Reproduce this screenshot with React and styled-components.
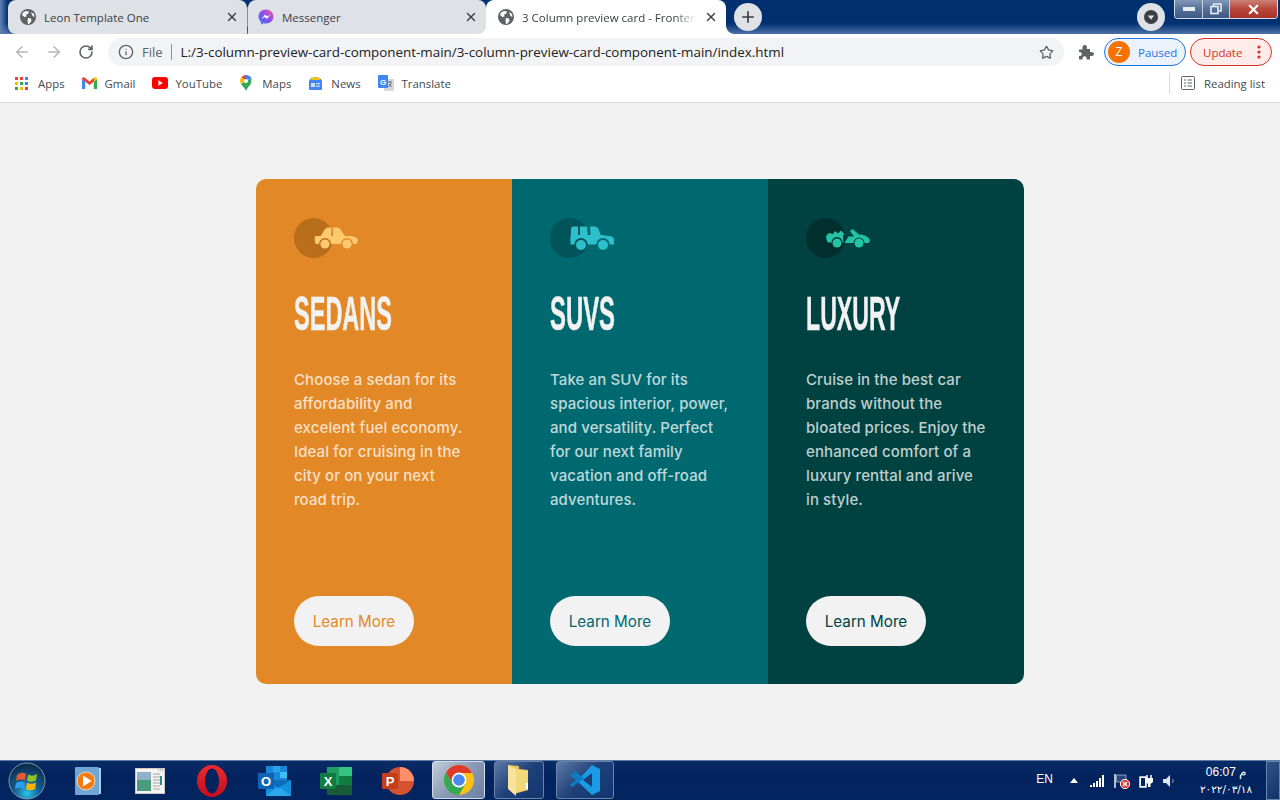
import React from 'react'
import styled, { createGlobalStyle } from 'styled-components'
import { ArrowLeft, ArrowRight, RotateCw, Info, Star, X, Plus } from 'lucide-react'

const GlobalStyle = createGlobalStyle`
  html, body { margin: 0; padding: 0; height: 100%; background: #f2f2f2; }
  #root { height: 100%; }
  * { box-sizing: border-box; }
`

const Screen = styled.div`
  height: 800px;
  display: flex;
  flex-direction: column;
  overflow: hidden;
  font-family: 'Open Sans', 'Liberation Sans', sans-serif;
`

/* browser chrome */
const TabStrip = styled.div`
  height: 34px;
  flex: none;
  display: flex;
  padding-left: 8px;
  background:
    linear-gradient(90deg, #5f82b4 0, rgba(95,130,180,0) 8px),
    linear-gradient(180deg, rgba(90,125,175,0) 68%, rgba(90,125,175,.85) 100%),
    #00306f;
`

const Tab = styled.div`
  position: relative;
  width: ${p => p.$width}px;
  display: flex;
  align-items: center;
  padding-left: ${p => p.$pad}px;
  padding-right: 8px;
  gap: 8px;
  font-size: 11.5px;
  color: #3c4043;
  white-space: nowrap;
  background: ${p => (p.$active ? '#fff' : '#dee1e6')};
  border-radius: ${p => p.$radius};
  z-index: ${p => (p.$active ? 0 : 1)};

  ${p => p.$active && `
    &::before, &::after {
      content: '';
      position: absolute;
      bottom: 0;
      width: 8px;
      height: 8px;
    }
    &::before { left: -8px; background: #fff; }
    &::after {
      right: -8px;
      background: radial-gradient(circle at 100% 0, transparent 7.5px, #fff 8px);
    }
  `}
`

const TabDivider = styled.div`
  width: 1px;
  height: 20px;
  align-self: center;
  background: #8a8d92;
  z-index: 2;
  flex: none;
`

const TabTitle = styled.span`
  flex: 1;
  overflow: hidden;
  mask-image: ${p => (p.$fade ? 'linear-gradient(90deg, #000 88%, transparent)' : 'none')};
`

const NewTab = styled.div`
  width: 28px;
  height: 28px;
  margin: 3px 0 0 8px;
  border-radius: 50%;
  background: #dee1e6;
  color: #3c4043;
  display: flex;
  align-items: center;
  justify-content: center;
`

const ProfileDot = styled.div`
  width: 28px;
  height: 28px;
  margin: 3px 9px 0 auto;
  border-radius: 50%;
  background: #dee1e6;
  display: flex;
  align-items: center;
  justify-content: center;
`

const WindowControls = styled.div`
  width: 104px;
  height: 19px;
  margin-right: 2px;
  display: flex;
  border: 1px solid #d6dde8;
  border-top: 0;
  border-radius: 0 0 4px 4px;
  overflow: hidden;
`

const WinButton = styled.div`
  width: ${p => p.$width}px;
  display: flex;
  align-items: center;
  justify-content: center;
  border-right: ${p => (p.$close ? '0' : '1px solid #c5cfdd')};
  background: ${p => (p.$close
    ? 'linear-gradient(180deg, #c98277 0, #b9473a 50%, #a8322a 100%)'
    : 'linear-gradient(180deg, #8298b8 0, #566f96 50%, #3c5a88 100%)')};
`

const Toolbar = styled.div`
  height: 38px;
  flex: none;
  background: #fff;
  display: flex;
  align-items: center;
  padding: 0 0 2px 6px;
`

const NavButton = styled.div`
  width: 32px;
  display: flex;
  justify-content: center;
  color: ${p => (p.$off ? '#b4b7bb' : '#5f6368')};
`

const AddressBar = styled.div`
  width: 956px;
  height: 28px;
  margin-left: 6px;
  border-radius: 14px;
  background: #f1f3f4;
  display: flex;
  align-items: center;
  padding: 0 10px;
  font-size: 13px;
  color: #202124;
`

const SiteLabel = styled.span`
  margin-left: 8px;
  padding-right: 8px;
  font-size: 13px;
  line-height: 16px;
  color: #5f6368;
  border-right: 1px solid #8f9296;
`

const Url = styled.span`
  margin-left: 9px;
  flex: 1;
  white-space: nowrap;
  font-size: 13.4px;
`

const ExtensionSlot = styled.div`
  width: 40px;
  padding-left: 4px;
  display: flex;
  justify-content: center;
`

const Pill = styled.div`
  width: 82px;
  height: 28px;
  margin-right: 4px;
  border-radius: 14px;
  border: 1px solid ${p => p.$line};
  background: ${p => p.$fill};
  color: ${p => p.$line};
  display: flex;
  align-items: center;
  font-size: 11.5px;
`

const Avatar = styled.span`
  width: 22px;
  height: 22px;
  margin: 0 8px 0 3px;
  border-radius: 50%;
  background: #f57200;
  color: #fff;
  font-size: 12px;
  text-align: center;
  line-height: 22px;
`

const UpdateLabel = styled.span`
  margin-left: 12px;
  flex: 1;
`

const Bookmarks = styled.div`
  height: 31px;
  flex: none;
  background: #fff;
  border-bottom: 1px solid #d8d8d8;
  display: flex;
  align-items: center;
  padding: 0 0 8px 15px;
  font-size: 11.4px;
  color: #444a50;
`

const Bookmark = styled.div`
  display: flex;
  align-items: center;
  gap: ${p => p.$gap}px;
  margin-right: ${p => p.$after}px;
`

const ReadingList = styled.div`
  margin-left: auto;
  width: 111px;
  height: 21px;
  border-left: 1px solid #d5d7da;
  display: flex;
  align-items: center;
  gap: 9px;
  padding-left: 11px;
`

/* the page itself */
const Main = styled.main`
  flex: 1;
  display: flex;
  align-items: center;
  justify-content: center;
  background: #f2f2f2;
`

const Card = styled.section`
  width: 768px;
  height: 505px;
  display: grid;
  grid-template-columns: repeat(3, minmax(0, 1fr));
  border-radius: 10px;
  overflow: hidden;
`

const Column = styled.article`
  background: ${p => p.$bg};
  padding: 39px 30px 38px 38px;
  display: flex;
  flex-direction: column;
  align-items: flex-start;
`

const IconBox = styled.div`
  position: relative;
  height: 40px;
  padding-left: 20px;
  display: flex;
  align-items: center;

  &::before {
    content: '';
    position: absolute;
    left: 0;
    top: 0;
    width: 39px;
    height: 40px;
    border-radius: 50%;
    background: ${p => p.$shade};
  }

  svg { position: relative; display: block; }
`

const Title = styled.h2`
  margin: 34px 0 0;
  height: 44px;
  font-family: 'Liberation Sans', sans-serif;
  font-size: 48px;
  line-height: 44px;
  font-weight: 700;
  color: #f2f2f2;
  white-space: nowrap;
  transform: scaleX(${p => p.$squeeze});
  transform-origin: left center;
  -webkit-text-stroke: .5px #f2f2f2;
`

const Copy = styled.p`
  margin: 32px 0 0;
  font-family: Inter, 'Open Sans', sans-serif;
  font-size: 15px;
  font-weight: 500;
  line-height: 24px;
  letter-spacing: .1px;
  color: rgba(255, 255, 255, .75);
  white-space: pre-line;
`

const LearnMore = styled.a`
  margin-top: auto;
  width: 120px;
  height: 50px;
  border-radius: 25px;
  background: #f2f2f2;
  color: ${p => p.$ink};
  font-family: Inter, 'Open Sans', sans-serif;
  font-size: 15.2px;
  display: flex;
  align-items: center;
  justify-content: center;
`

/* windows taskbar */
const Taskbar = styled.footer`
  height: 40px;
  flex: none;
  display: flex;
  background: linear-gradient(180deg, #0a2c66 0, #02235e 40%, #02245f 100%);
  border-top: 1px solid #5e7ba5;
  color: #fff;
  font-family: 'Liberation Sans', sans-serif;
`

const StartSlot = styled.div`
  width: 57px;
  padding-left: 8px;
  display: flex;
  align-items: center;
`

const AppSlot = styled.div`
  width: 62px;
  display: flex;
  align-items: center;
  justify-content: center;
`

const RunningApp = styled.div`
  width: ${p => p.$width}px;
  height: 38px;
  margin: 0 ${p => p.$after}px 0 ${p => p.$before}px;
  border-radius: 3px;
  border: 1px solid ${p => (p.$active ? '#d5dce8' : '#6b83a8')};
  background: ${p => (p.$active
    ? 'linear-gradient(135deg, #c3cddd 0, #8a9ab4 50%, #6c80a3 100%)'
    : 'linear-gradient(135deg, #5d7aa6 0, #1e4078 50%, #14366f 100%)')};
  display: flex;
  align-items: center;
  justify-content: center;
`

const Tray = styled.div`
  margin-left: auto;
  display: flex;
  align-items: center;
`

const TraySlot = styled.div`
  width: 24px;
  display: flex;
  justify-content: center;
  margin-left: ${p => p.$before || 0}px;
`

const Lang = styled.span`
  width: 29px;
  margin-top: -4px;
  text-align: center;
  font-size: 12px;
`

const Clock = styled.div`
  width: 72px;
  margin: 0 4px 0 8px;
  text-align: center;
  font-size: 12px;
  line-height: 17px;
`

const ClockDate = styled.div`
  font-family: 'DejaVu Sans', sans-serif;
  font-size: 10.5px;
  direction: ltr;
  unicode-bidi: embed;
`

const ShowDesktop = styled.div`
  width: 14px;
  align-self: stretch;
  border: 1px solid #6b83a8;
  background: linear-gradient(135deg, #2f5288, #10326a);
`

/* drawings */
const Globe = () => (
  <svg width="16" height="16" viewBox="0 0 16 16" style={{ flex: 'none' }}>
    <circle cx="8" cy="8" r="8" fill="#5f6368" />
    <path d="M3 3.5 L6 2 L9 2.5 L8 5 L6 5.5 L6.5 7.5 L4.5 8 L2 6Z M8 9 L11 9.5 L11.5 12 L9 15 L8 15 L7.5 11.5Z M11 3 L14 5 L14.5 8 L12.5 7 Z" fill="#fff" />
  </svg>
)

const Messenger = () => (
  <svg width="16" height="16" viewBox="0 0 16 16" style={{ flex: 'none' }}>
    <defs>
      <linearGradient id="msg" x1="0" y1="1" x2="1" y2="0">
        <stop offset="0" stopColor="#2f7cf6" />
        <stop offset=".5" stopColor="#8a4cf0" />
        <stop offset="1" stopColor="#f2648a" />
      </linearGradient>
    </defs>
    <path d="M8 .5 C3.6.5 .5 3.6 .5 7.6 C.5 9.8 1.4 11.6 3 12.9 V15.5 L5.4 14.2 C6.2 14.5 7.1 14.6 8 14.6 C12.4 14.6 15.5 11.5 15.5 7.6 C15.5 3.6 12.4 .5 8 .5Z" fill="url(#msg)" />
    <path d="M3.5 10 L7 5.6 L9.3 7.5 L12.5 5.6 L9 10 L6.8 8.1Z" fill="#fff" />
  </svg>
)

const AppsGrid = () => {
  const colors = ['#ea4335', '#ea4335', '#4285f4', '#fbbc05', '#34a853', '#4285f4', '#34a853', '#fbbc05', '#ea4335']
  return (
    <svg width="13" height="13" viewBox="0 0 13 13">
      {colors.map((c, i) => (
        <rect key={i} x={(i % 3) * 5} y={Math.floor(i / 3) * 5} width="3" height="3" fill={c} />
      ))}
    </svg>
  )
}

const GmailIcon = () => (
  <svg width="15" height="12" viewBox="0 0 15 12">
    <path d="M0 2 V12 H3.2 V4.5Z" fill="#4285f4" />
    <path d="M15 2 V12 H11.8 V4.5Z" fill="#34a853" />
    <path d="M0 1.6 Q1.2 -.5 3 .8 L7.5 4.4 L12 .8 V4.5 L7.5 8 L0 2.2Z" fill="#ea4335" />
    <path d="M12 .8 Q14 -.5 15 1.6 V2.2 L12 4.5Z" fill="#fbbc05" />
  </svg>
)

const YouTubeIcon = () => (
  <svg width="16" height="12" viewBox="0 0 16 12">
    <rect width="16" height="12" rx="3" fill="#f00" />
    <path d="M6.4 3.3 L10.8 6 L6.4 8.7Z" fill="#fff" />
  </svg>
)

const MapsIcon = () => (
  <svg width="12" height="16" viewBox="0 0 12 16">
    <path d="M6 0 A6 6 0 0 1 11.6 3.6 L6 6 Z" fill="#4285f4" />
    <path d="M6 0 A6 6 0 0 0 1.4 2.2 L6 6Z" fill="#ea4335" />
    <path d="M1.4 2.2 A6 6 0 0 0 1 9 L6 6Z" fill="#fbbc05" />
    <path d="M1 9 C2.5 11.5 5 13 6 16 C6.8 13.5 9 11.5 10.8 9 L11.6 3.6 L6 6Z" fill="#34a853" />
    <circle cx="6" cy="6" r="2.1" fill="#fff" />
  </svg>
)

const NewsIcon = () => (
  <svg width="15" height="15" viewBox="0 0 15 15">
    <path d="M2 3 L7.5 1 L13 3 V6 H2Z" fill="#34a853" />
    <path d="M3 1.5 H12 V4 H3Z" fill="#fbbc05" />
    <rect x="1" y="4" width="13" height="10" rx="1" fill="#4285f4" />
    <rect x="3" y="7" width="4" height="4" fill="#cfe0fc" />
    <rect x="8" y="7" width="4" height="1.2" fill="#cfe0fc" />
    <rect x="8" y="9.5" width="4" height="1.2" fill="#cfe0fc" />
  </svg>
)

const TranslateIcon = () => (
  <svg width="16" height="16" viewBox="0 0 16 16">
    <rect x="6" y="4" width="10" height="12" fill="#d5d7da" />
    <path d="M10 7 H14 M12 6 V8 M10.5 12 L13.5 8 M11 9 L14 12" stroke="#70757a" strokeWidth="1" fill="none" />
    <rect width="10" height="13" rx="1" fill="#4285f4" />
    <text x="2" y="9.5" fontSize="8" fontWeight="700" fill="#fff" fontFamily="Liberation Sans, sans-serif">G</text>
  </svg>
)

const ListIcon = () => (
  <svg width="14" height="14" viewBox="0 0 14 14" fill="none" stroke="#5f6368">
    <rect x=".5" y=".5" width="13" height="13" rx="1" />
    <path d="M3 4 H5 M6.5 4 H11 M3 7 H5 M6.5 7 H11 M3 10 H5 M6.5 10 H11" />
  </svg>
)

const Puzzle = () => (
  <svg width="16" height="16" viewBox="0 0 16 16">
    <path d="M1 5.5 H4.6 C4.2 3.5 4.6 1 6.7 1 C8.8 1 9.2 3.5 8.8 5 H12 V8 C14 7.6 16 8.2 16 10 C16 11.8 14 12.4 12 12 V15.5 H8.6 C9 13.6 8.2 12.3 6.6 12.3 C5 12.3 4.2 13.6 4.6 15.5 H1 V12 C2.6 12.3 3.8 11.4 3.8 10 C3.8 8.6 2.6 7.8 1 8.1Z" fill="#5f6368" />
  </svg>
)

const Sedan = ({ color }) => (
  <svg width="44" height="22" viewBox="0 0 44 22" fill={color}>
    <path d="M6.5 9.5 L11 2 Q12 .5 14 .5 H17.5 V9.5Z" />
    <path d="M19 .5 H23 Q25 .5 26.2 2 L31 9.5 H19Z" />
    <path d="M1 9 H35 Q42 9 44 12.5 L43 17 H39 A6 6 0 0 0 27 17 H17 A6 6 0 0 0 5 17 H2 Q0 15 1 9Z" />
    <circle cx="11" cy="17" r="4.6" />
    <circle cx="33" cy="17" r="4.6" />
  </svg>
)

const Suv = ({ color }) => (
  <svg width="44" height="24" viewBox="0 0 44 24" fill={color}>
    <path d="M3 .5 H8 V9.5 H1 V3 Q1 .5 3 .5Z" />
    <path d="M10 .5 H17 L18 9.5 H10Z" />
    <path d="M20 .5 H25 Q27 .5 28.5 3 L31 9.5 H20.5Z" />
    <path d="M.5 9 H32 L42 10.5 Q44 11 44 14 V18.5 H39.6 A6.6 6.6 0 0 0 26.4 18.5 H17.6 A6.6 6.6 0 0 0 4.4 18.5 H.5Z" />
    <circle cx="11" cy="19" r="5" />
    <circle cx="33" cy="19" r="5" />
  </svg>
)

const Luxury = ({ color }) => (
  <svg width="44" height="19" viewBox="0 0 44 19" fill={color}>
    <path d="M0 7 L3 4 L7 5 L9 2 L12 4.5 L15 1.5 L18 4.5 L17 8 L17.5 13.5 H16.5 A5.5 5.5 0 0 0 5.5 13.5 H2 Q0 11 0 7Z" />
    <path d="M18.5 14 L22.5 7.5 H28 L24 2 L26.5 0 L33 5.5 Q41 5.5 44 11 L43 14 H38.5 A5.5 5.5 0 0 0 27.5 14Z" />
    <circle cx="11" cy="14" r="4.5" />
    <circle cx="33" cy="14" r="4.5" />
  </svg>
)

const WinOrb = () => (
  <svg width="38" height="38" viewBox="0 0 38 38">
    <defs>
      <radialGradient id="orb" cx=".5" cy=".85" r=".8">
        <stop offset="0" stopColor="#29c4e8" />
        <stop offset=".45" stopColor="#135c90" />
        <stop offset="1" stopColor="#0c2c4c" />
      </radialGradient>
    </defs>
    <circle cx="19" cy="19" r="18" fill="url(#orb)" stroke="#7f98a8" />
    <path d="M9 13 Q14 9 18 12 L17 18.5 Q13 16.5 8 19Z" fill="#e8582c" />
    <path d="M20 12.5 Q24 15 29 12 L28 18.5 Q23 21 19 18.5Z" fill="#8fc31f" />
    <path d="M8 21 Q13 18.5 17 20.5 L16 27 Q12 24.5 7 27Z" fill="#2f9ee8" />
    <path d="M19 20.5 Q23 23 28 20.5 L27 27 Q22 29.5 18 27Z" fill="#f7b500" />
  </svg>
)

const MediaPlayer = () => (
  <svg width="28" height="30" viewBox="0 0 28 30">
    <rect x="7" y="2" width="20" height="26" fill="#a9cfea" />
    <rect x="1" y="1" width="24" height="28" rx="1" fill="#6ea6d6" />
    <circle cx="12" cy="15" r="9" fill="#f47b14" stroke="#fbd7ae" strokeWidth="1" />
    <path d="M9 9.5 L17.5 15 L9 20.5Z" fill="#fff" />
  </svg>
)

const WindowApp = () => (
  <svg width="30" height="26" viewBox="0 0 30 26">
    <rect x=".5" y=".5" width="29" height="25" fill="#f4f4f2" stroke="#c9c9c6" />
    <rect x="2" y="4" width="14" height="19" fill="#4b9b80" />
    <rect x="2" y="4" width="14" height="8" fill="#8fb0c9" />
    <path d="M18 6 H25 M18 9 H25 M18 12 H25 M18 15 H25 M18 18 H25 M18 21 H25" stroke="#a5a5a2" />
    <rect x="25" y="8" width="2" height="9" fill="#2f8a8c" />
    <path d="M23 2 H28" stroke="#7d7d7d" strokeDasharray="1 1" />
  </svg>
)

const Opera = () => (
  <svg width="30" height="32" viewBox="0 0 30 32">
    <defs>
      <linearGradient id="op" x1="0" y1="0" x2="0" y2="1">
        <stop offset="0" stopColor="#f02a30" />
        <stop offset="1" stopColor="#c00d1c" />
      </linearGradient>
    </defs>
    <ellipse cx="15" cy="16" rx="15" ry="16" fill="url(#op)" />
    <ellipse cx="15" cy="16" rx="7" ry="12.5" fill="#02235e" />
  </svg>
)

const Outlook = () => (
  <svg width="33" height="30" viewBox="0 0 33 30">
    <rect x="8" y="0" width="21" height="18" fill="#1a86d9" />
    <rect x="15" y="0" width="7" height="6" fill="#28a8ea" />
    <rect x="22" y="6" width="7" height="6" fill="#50d9ff" opacity=".7" />
    <path d="M8 14 H33 V30 H8Z" fill="#1490df" />
    <path d="M8 30 L20 20 L33 30Z" fill="#28a8ea" />
    <path d="M8 14 L20 22 L33 14" fill="#0c6dbd" />
    <rect x="0" y="7" width="16" height="16" rx="1" fill="#0f62b4" />
    <text x="8" y="20" textAnchor="middle" fontSize="13" fontWeight="700" fill="#fff" fontFamily="Liberation Sans, sans-serif">O</text>
  </svg>
)

const Excel = () => (
  <svg width="32" height="28" viewBox="0 0 32 28">
    <rect x="7" y="0" width="25" height="28" fill="#1f9e62" />
    <rect x="19" y="0" width="13" height="9" fill="#33c481" />
    <rect x="7" y="18" width="25" height="10" fill="#185c37" />
    <rect x="19" y="9" width="13" height="9" fill="#107c41" />
    <rect x="0" y="6" width="16" height="16" rx="1" fill="#107c41" />
    <text x="8" y="19" textAnchor="middle" fontSize="13" fontWeight="700" fill="#fff" fontFamily="Liberation Sans, sans-serif">X</text>
  </svg>
)

const PowerPoint = () => (
  <svg width="32" height="28" viewBox="0 0 32 28">
    <circle cx="18" cy="14" r="14" fill="#d35230" />
    <path d="M18 0 A14 14 0 0 1 32 14 H18Z" fill="#ff8f6b" />
    <rect x="0" y="6" width="16" height="16" rx="1" fill="#c43e1c" />
    <text x="8" y="19" textAnchor="middle" fontSize="13" fontWeight="700" fill="#fff" fontFamily="Liberation Sans, sans-serif">P</text>
  </svg>
)

const ChromeLogo = () => (
  <svg width="30" height="30" viewBox="0 0 30 30">
    <circle cx="15" cy="15" r="15" fill="#fbc117" />
    <path d="M15 0 A15 15 0 0 0 2 7.5 L8.5 18.7 L15 8 H28 A15 15 0 0 0 15 0Z" fill="#e0392b" />
    <path d="M2 7.5 A15 15 0 0 0 15 30 L21.5 18.7 L8.5 18.7Z" fill="#35a853" />
    <circle cx="15" cy="15" r="7.4" fill="#fff" />
    <circle cx="15" cy="15" r="5.8" fill="#4a87ee" />
  </svg>
)

const Folder = () => (
  <svg width="26" height="32" viewBox="0 0 26 32">
    <path d="M2 1 L13 2 L13 5 L22 6 V26 L8 30 L2 24Z" fill="#e8c45e" />
    <path d="M2 1 L10 5 V32 L2 25Z" fill="#f7e39a" />
    <path d="M10 5 L22 7 V26 L10 28Z" fill="#f3d77b" />
    <rect x="20" y="19" width="2" height="6" fill="#fff" />
  </svg>
)

const VsCode = () => (
  <svg width="32" height="32" viewBox="0 0 32 32">
    <path d="M23 1 L31 5 V27 L23 31 L8 17 L23 1Z M23 9 L14 16 L23 23Z" fill="#1a9be6" fillRule="evenodd" />
    <path d="M3 10 L1 12 L7 16 L1 21 L3 23 L12 16.5 L7 13Z" fill="#0c7cc4" />
    <path d="M6 7 L15 14 L12 17 L3 10Z" fill="#0c7cc4" />
  </svg>
)

const CARDS = [
  {
    title: 'SEDANS',
    squeeze: 0.49,
    bg: '#e38826',
    shade: 'rgba(60, 30, 0, .25)',
    ink: '#e38826',
    car: <Sedan color="#fdc96f" />,
    text: 'Choose a sedan for its\naffordability and\nexcelent fuel economy.\nIdeal for cruising in the\ncity or on your next\nroad trip.',
  },
  {
    title: 'SUVS',
    squeeze: 0.497,
    bg: '#006970',
    shade: '#00545a',
    ink: '#006970',
    car: <Suv color="#2cc0cc" />,
    text: 'Take an SUV for its\nspacious interior, power,\nand versatility. Perfect\nfor our next family\nvacation and off-road\nadventures.',
  },
  {
    title: 'LUXURY',
    squeeze: 0.482,
    bg: '#004241',
    shade: '#002f2e',
    ink: '#004241',
    car: <Luxury color="#22c4a5" />,
    text: 'Cruise in the best car\nbrands without the\nbloated prices. Enjoy the\nenhanced comfort of a\nluxury renttal and arive\nin style.',
  },
]

const App = () => (
  <Screen>
    <GlobalStyle />
    <TabStrip>
      <Tab $width={239} $pad={12} $radius="8px 8px 0 8px">
        <Globe /><TabTitle>Leon Template One</TabTitle>
        <X size={14} strokeWidth={2.4} />
      </Tab>
      <TabDivider />
      <Tab $width={238} $pad={10} $radius="8px 8px 8px 0">
        <Messenger /><TabTitle>Messenger</TabTitle>
        <X size={14} strokeWidth={2.4} />
      </Tab>
      <Tab $active $width={240} $pad={12} $radius="8px 8px 0 0">
        <Globe /><TabTitle $fade>3 Column preview card - Frontend Mentor</TabTitle>
        <X size={14} strokeWidth={2.4} />
      </Tab>
      <NewTab><Plus size={18} strokeWidth={2.2} /></NewTab>
      <ProfileDot>
        <svg width="14" height="14" viewBox="0 0 14 14">
          <circle cx="7" cy="7" r="7" fill="#3c4043" />
          <path d="M3.8 5.5 H10.2 L7 9.8Z" fill="#dee1e6" />
        </svg>
      </ProfileDot>
      <WindowControls>
        <WinButton $width={28}>
          <svg width="12" height="5"><rect width="12" height="4" fill="#e8edf4" /></svg>
        </WinButton>
        <WinButton $width={27}>
          <svg width="12" height="12" fill="none" stroke="#e8edf4" strokeWidth="1.6">
            <rect x="1" y="3.5" width="7" height="7" />
            <path d="M3.5 3 V1 H11 V8 H8.5" />
          </svg>
        </WinButton>
        <WinButton $width={47} $close>
          <X size={15} color="#fff" strokeWidth={3.4} />
        </WinButton>
      </WindowControls>
    </TabStrip>

    <Toolbar>
      <NavButton $off><ArrowLeft size={18} /></NavButton>
      <NavButton $off><ArrowRight size={18} /></NavButton>
      <NavButton><RotateCw size={16} strokeWidth={2.4} /></NavButton>
      <AddressBar>
        <Info size={16} color="#5f6368" />
        <SiteLabel>File</SiteLabel>
        <Url>L:/3-column-preview-card-component-main/3-column-preview-card-component-main/index.html</Url>
        <Star size={15} color="#5f6368" strokeWidth={2} />
      </AddressBar>
      <ExtensionSlot><Puzzle /></ExtensionSlot>
      <Pill $line="#1a73e8" $fill="#ecf2fc">
        <Avatar>Z</Avatar>Paused
      </Pill>
      <Pill $line="#d93025" $fill="#fdecea">
        <UpdateLabel>Update</UpdateLabel>
        <svg width="4" height="14" style={{ marginRight: 10 }} fill="#d93025">
          <circle cx="2" cy="2" r="1.6" /><circle cx="2" cy="7" r="1.6" /><circle cx="2" cy="12" r="1.6" />
        </svg>
      </Pill>
    </Toolbar>

    <Bookmarks>
      <Bookmark $gap={10} $after={17}><AppsGrid />Apps</Bookmark>
      <Bookmark $gap={8} $after={16}><GmailIcon />Gmail</Bookmark>
      <Bookmark $gap={8} $after={18}><YouTubeIcon />YouTube</Bookmark>
      <Bookmark $gap={10} $after={17}><MapsIcon />Maps</Bookmark>
      <Bookmark $gap={8} $after={17}><NewsIcon />News</Bookmark>
      <Bookmark $gap={8} $after={0}><TranslateIcon />Translate</Bookmark>
      <ReadingList><ListIcon />Reading list</ReadingList>
    </Bookmarks>

    <Main>
      <Card>
        {CARDS.map(card => (
          <Column key={card.title} $bg={card.bg}>
            <IconBox $shade={card.shade}>{card.car}</IconBox>
            <Title $squeeze={card.squeeze}>{card.title}</Title>
            <Copy>{card.text}</Copy>
            <LearnMore $ink={card.ink}>Learn More</LearnMore>
          </Column>
        ))}
      </Card>
    </Main>

    <Taskbar>
      <StartSlot><WinOrb /></StartSlot>
      <AppSlot><MediaPlayer /></AppSlot>
      <AppSlot><WindowApp /></AppSlot>
      <AppSlot><Opera /></AppSlot>
      <AppSlot><Outlook /></AppSlot>
      <AppSlot><Excel /></AppSlot>
      <AppSlot><PowerPoint /></AppSlot>
      <RunningApp $active $width={53} $before={3} $after={9}><ChromeLogo /></RunningApp>
      <RunningApp $width={50} $before={0} $after={12}><Folder /></RunningApp>
      <RunningApp $width={58} $before={0} $after={0}><VsCode /></RunningApp>
      <Tray>
        <Lang>EN</Lang>
        <TraySlot $before={3}>
          <svg width="8" height="5"><path d="M0 5 L4 0 L8 5Z" fill="#fff" /></svg>
        </TraySlot>
        <TraySlot>
          <svg width="16" height="12" fill="#fff">
            <rect x="0" y="10" width="2" height="2" /><rect x="3" y="8" width="2" height="4" />
            <rect x="6" y="6" width="2" height="6" /><rect x="9" y="3" width="2" height="9" />
            <rect x="12" y="0" width="2" height="12" />
          </svg>
        </TraySlot>
        <TraySlot>
          <svg width="16" height="16" viewBox="0 0 16 16">
            <path d="M1 1 V15" stroke="#fff" strokeWidth="1.4" />
            <path d="M2.5 2 H12 V9 H2.5Z" fill="#26467c" stroke="#dbe3ee" strokeWidth=".6" />
            <circle cx="11" cy="11" r="4.6" fill="#e53030" stroke="#fff" />
            <path d="M9 9 L13 13 M13 9 L9 13" stroke="#fff" strokeWidth="1.4" />
          </svg>
        </TraySlot>
        <TraySlot>
          <svg width="16" height="16" viewBox="0 0 16 16" fill="#fff">
            <rect x="1" y="3" width="8" height="12" stroke="#0c2c62" strokeWidth=".6" />
            <rect x="3" y="5" width="4" height="8" fill="#02245f" />
            <path d="M9 2 V5 M13 2 V5" stroke="#fff" strokeWidth="1.5" />
            <path d="M7.5 5 H15 V9 L12.5 11 V14 H10 V11 L7.5 9Z" />
          </svg>
        </TraySlot>
        <TraySlot>
          <svg width="14" height="14" viewBox="0 0 14 14">
            <path d="M0 5 H3 L7 1 V13 L3 9 H0Z" fill="#dfe5ee" />
            <path d="M9.5 5 Q11 7 9.5 9" stroke="#8ea4c4" fill="none" />
          </svg>
        </TraySlot>
        <Clock>
          <div>06:07 م</div>
          <ClockDate>٢٠٢٢/٠٣/١٨</ClockDate>
        </Clock>
        <ShowDesktop />
      </Tray>
    </Taskbar>
  </Screen>
)

export default App
